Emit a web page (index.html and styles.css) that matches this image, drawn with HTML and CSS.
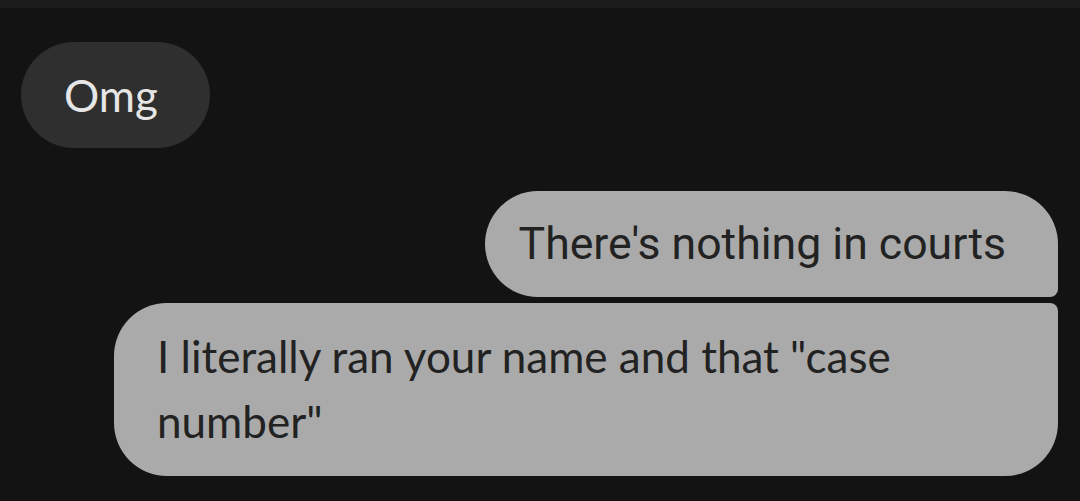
FILE: index.html
```
<html>
<head>
    <title>Messages</title>
    <meta charset="UTF-8">
    <link rel="stylesheet" href="styles.css">
</head>
<body>
    <div class="topbar"></div>
    <div id="thread">
        <div class="msg incoming">Omg</div>
        <div class="msg outgoing first">There's nothing in courts</div>
        <div class="msg outgoing last">I literally ran your name and that "case number"</div>
    </div>
</body>
</html>
```
FILE: styles.css
```
body {
    margin: 0;
    background: #131313;
    font-family: 'Lato', 'Roboto', sans-serif;
}

.topbar {
    height: 8px;
    background: #1c1c1c;
}

#thread {
    display: flex;
    flex-direction: column;
    padding: 34px 22px 0 21px;
}

.msg {
    font-size: 44px;
    line-height: 65px;
    padding: 21px 43px 20px 43px;
    box-sizing: border-box;
}

.incoming {
    align-self: flex-start;
    background: #2f2f2f;
    color: #e6e6e6;
    padding-right: 52px;
    border-radius: 53px;
}

.outgoing {
    align-self: flex-end;
    background: #aaaaaa;
    color: #222222;
    max-width: 944px;
}

    .outgoing.first {
        margin-top: 43px;
        font-family: 'Roboto', sans-serif;
        font-size: 44.6px;
        padding-left: 34px;
        padding-right: 52px;
        border-radius: 53px 53px 8px 53px;
    }

    .outgoing.last {
        margin-top: 6px;
        width: 944px;
        padding-bottom: 22px;
        border-radius: 53px 8px 53px 53px;
    }
```
